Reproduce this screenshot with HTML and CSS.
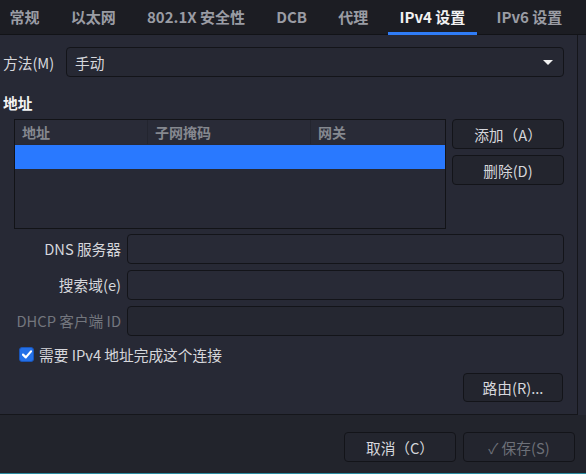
FILE: index.html
```html
<!DOCTYPE html>
<html lang="zh-CN">
<head>
    <meta charset="UTF-8">
    <title>IPv4 设置</title>
    <link rel="stylesheet" href="styles.css">
</head>
<body>
    <div class="tabs">
        <div class="tab">常规</div>
        <div class="tab">以太网</div>
        <div class="tab">802.1X 安全性</div>
        <div class="tab">DCB</div>
        <div class="tab">代理</div>
        <div class="tab active">IPv4 设置</div>
        <div class="tab">IPv6 设置</div>
    </div>

    <div class="main">
        <div class="panel">
            <div class="method-row">
                <span class="method-label">方法(M)</span>
                <div class="combo">
                    <span>手动</span>
                    <span class="arrow"></span>
                </div>
            </div>

            <div class="section-title">地址</div>

            <div class="addr">
                <div class="addr-table">
                    <div class="thead">
                        <div class="th col-addr">地址</div>
                        <div class="th col-mask">子网掩码</div>
                        <div class="th col-gw">网关</div>
                    </div>
                    <div class="trow selected"></div>
                </div>
                <div class="addr-buttons">
                    <button class="btn">添加（A）</button>
                    <button class="btn">删除(D)</button>
                </div>
            </div>

            <div class="form">
                <label class="form-label">DNS 服务器</label>
                <div class="entry"></div>
                <label class="form-label">搜索域(e)</label>
                <div class="entry"></div>
                <label class="form-label disabled">DHCP 客户端 ID</label>
                <div class="entry disabled"></div>
            </div>

            <div class="check-row">
                <span class="checkbox">
                    <svg width="10" height="9" viewBox="0 0 10 9">
                        <path d="M1 4.6 L3.8 7.4 L9 1.4" fill="none" stroke="#fff" stroke-width="2.2" stroke-linecap="round" stroke-linejoin="round"/>
                    </svg>
                </span>
                <span>需要 IPv4 地址完成这个连接</span>
            </div>

            <div class="route-row">
                <button class="btn route">路由(R)...</button>
            </div>
        </div>
    </div>

    <div class="footer">
        <button class="btn">取消（C）</button>
        <button class="btn disabled">✓ 保存(S)</button>
    </div>
    <div class="bottom-line"></div>
</body>
</html>
```

FILE: styles.css
```css
body {
    margin: 0;
    width: 586px;
    height: 474px;
    overflow: hidden;
    background-color: #22242c;
    color: #d6d7dc;
    font-family: "Noto Sans CJK SC", "Noto Sans", sans-serif;
    font-size: 14.7px;
}
.tabs {
    display: flex;
    height: 34px;
    background-color: #1c1d23;
    border-bottom: 1px solid #121317;
    margin-left: -6px;
}
.tab {
    position: relative;
    padding: 0 15.6px;
    line-height: 33px;
    font-size: 15px;
    font-weight: bold;
    color: #9a9ca4;
    white-space: nowrap;
}
.tab.active {
    color: #f2f2f2;
}
.tab.active::after {
    content: "";
    position: absolute;
    left: 4px;
    right: 4px;
    bottom: -1px;
    height: 3px;
    background-color: #2f7cf6;
}
.main {
    height: 380px;
    background-color: #272935;
}
.panel {
    box-sizing: border-box;
    width: 578px;
    height: 380px;
    border-right: 1px solid #15161b;
    border-bottom: 1px solid #15161b;
    padding: 12px 13px 0 3px;
}
.method-row {
    display: flex;
    align-items: center;
    gap: 12px;
}
.method-label {
    width: 51px;
    white-space: nowrap;
}
.combo {
    flex: 1;
    box-sizing: border-box;
    height: 30px;
    display: flex;
    align-items: center;
    justify-content: space-between;
    padding: 0 10px 0 8px;
    background-color: #262833;
    border: 1px solid #131419;
    border-radius: 4px;
}
.arrow {
    width: 0;
    height: 0;
    border-left: 5px solid transparent;
    border-right: 5px solid transparent;
    border-top: 5px solid #f2f2f2;
}
.section-title {
    margin-top: 16px;
    line-height: 20px;
    font-weight: bold;
    color: #f4f4f4;
}
.addr {
    display: flex;
    gap: 6px;
    margin-top: 6px;
    margin-left: 11px;
}
.addr-table {
    box-sizing: border-box;
    width: 432px;
    height: 110px;
    border: 1px solid #121317;
    background-color: #272935;
}
.thead {
    display: flex;
    height: 24px;
    background-color: #292b37;
}
.th {
    box-sizing: border-box;
    padding-left: 7px;
    line-height: 24px;
    font-size: 14px;
    font-weight: bold;
    color: #85888f;
    border-right: 1px solid #23252f;
}
.col-addr { width: 133px; }
.col-mask { width: 163px; }
.col-gw { flex: 1; border-right: none; }
.trow {
    height: 24px;
    margin-top: 1px;
}
.trow.selected {
    background-color: #2979ff;
}
.addr-buttons {
    display: flex;
    flex-direction: column;
    gap: 6px;
}
.btn {
    box-sizing: border-box;
    width: 112px;
    height: 30px;
    background-color: #23252e;
    border: 1px solid #131419;
    border-radius: 4px;
    color: #d6d7dc;
    font-family: inherit;
    font-size: 14.7px;
    padding: 0;
}
.btn.disabled {
    color: #6d7078;
}
.form {
    display: grid;
    grid-template-columns: 118px 1fr;
    column-gap: 6px;
    row-gap: 6px;
    margin-top: 5px;
}
.form-label {
    text-align: right;
    line-height: 30px;
    white-space: nowrap;
}
.form-label.disabled {
    color: #73767e;
}
.entry {
    box-sizing: border-box;
    height: 30px;
    background-color: #282a36;
    border: 1px solid #131419;
    border-radius: 4px;
}
.entry.disabled {
    background-color: #252731;
}
.check-row {
    display: flex;
    align-items: center;
    gap: 5px;
    height: 22px;
    margin-top: 7px;
    margin-left: 16px;
}
.checkbox {
    box-sizing: border-box;
    width: 15px;
    height: 15px;
    border-radius: 3px;
    background-color: #2470e8;
    border: 1px solid #1a55b8;
    display: flex;
    align-items: center;
    justify-content: center;
}
.route-row {
    display: flex;
    justify-content: flex-end;
    margin-top: 8px;
    margin-right: 1px;
}
.btn.route {
    width: 100px;
    height: 29px;
}
.footer {
    display: flex;
    justify-content: flex-end;
    gap: 7px;
    height: 58px;
    box-sizing: border-box;
    padding: 17px 11px 0 0;
}
.bottom-line {
    height: 1px;
    background-color: #2a8ca0;
}
```
